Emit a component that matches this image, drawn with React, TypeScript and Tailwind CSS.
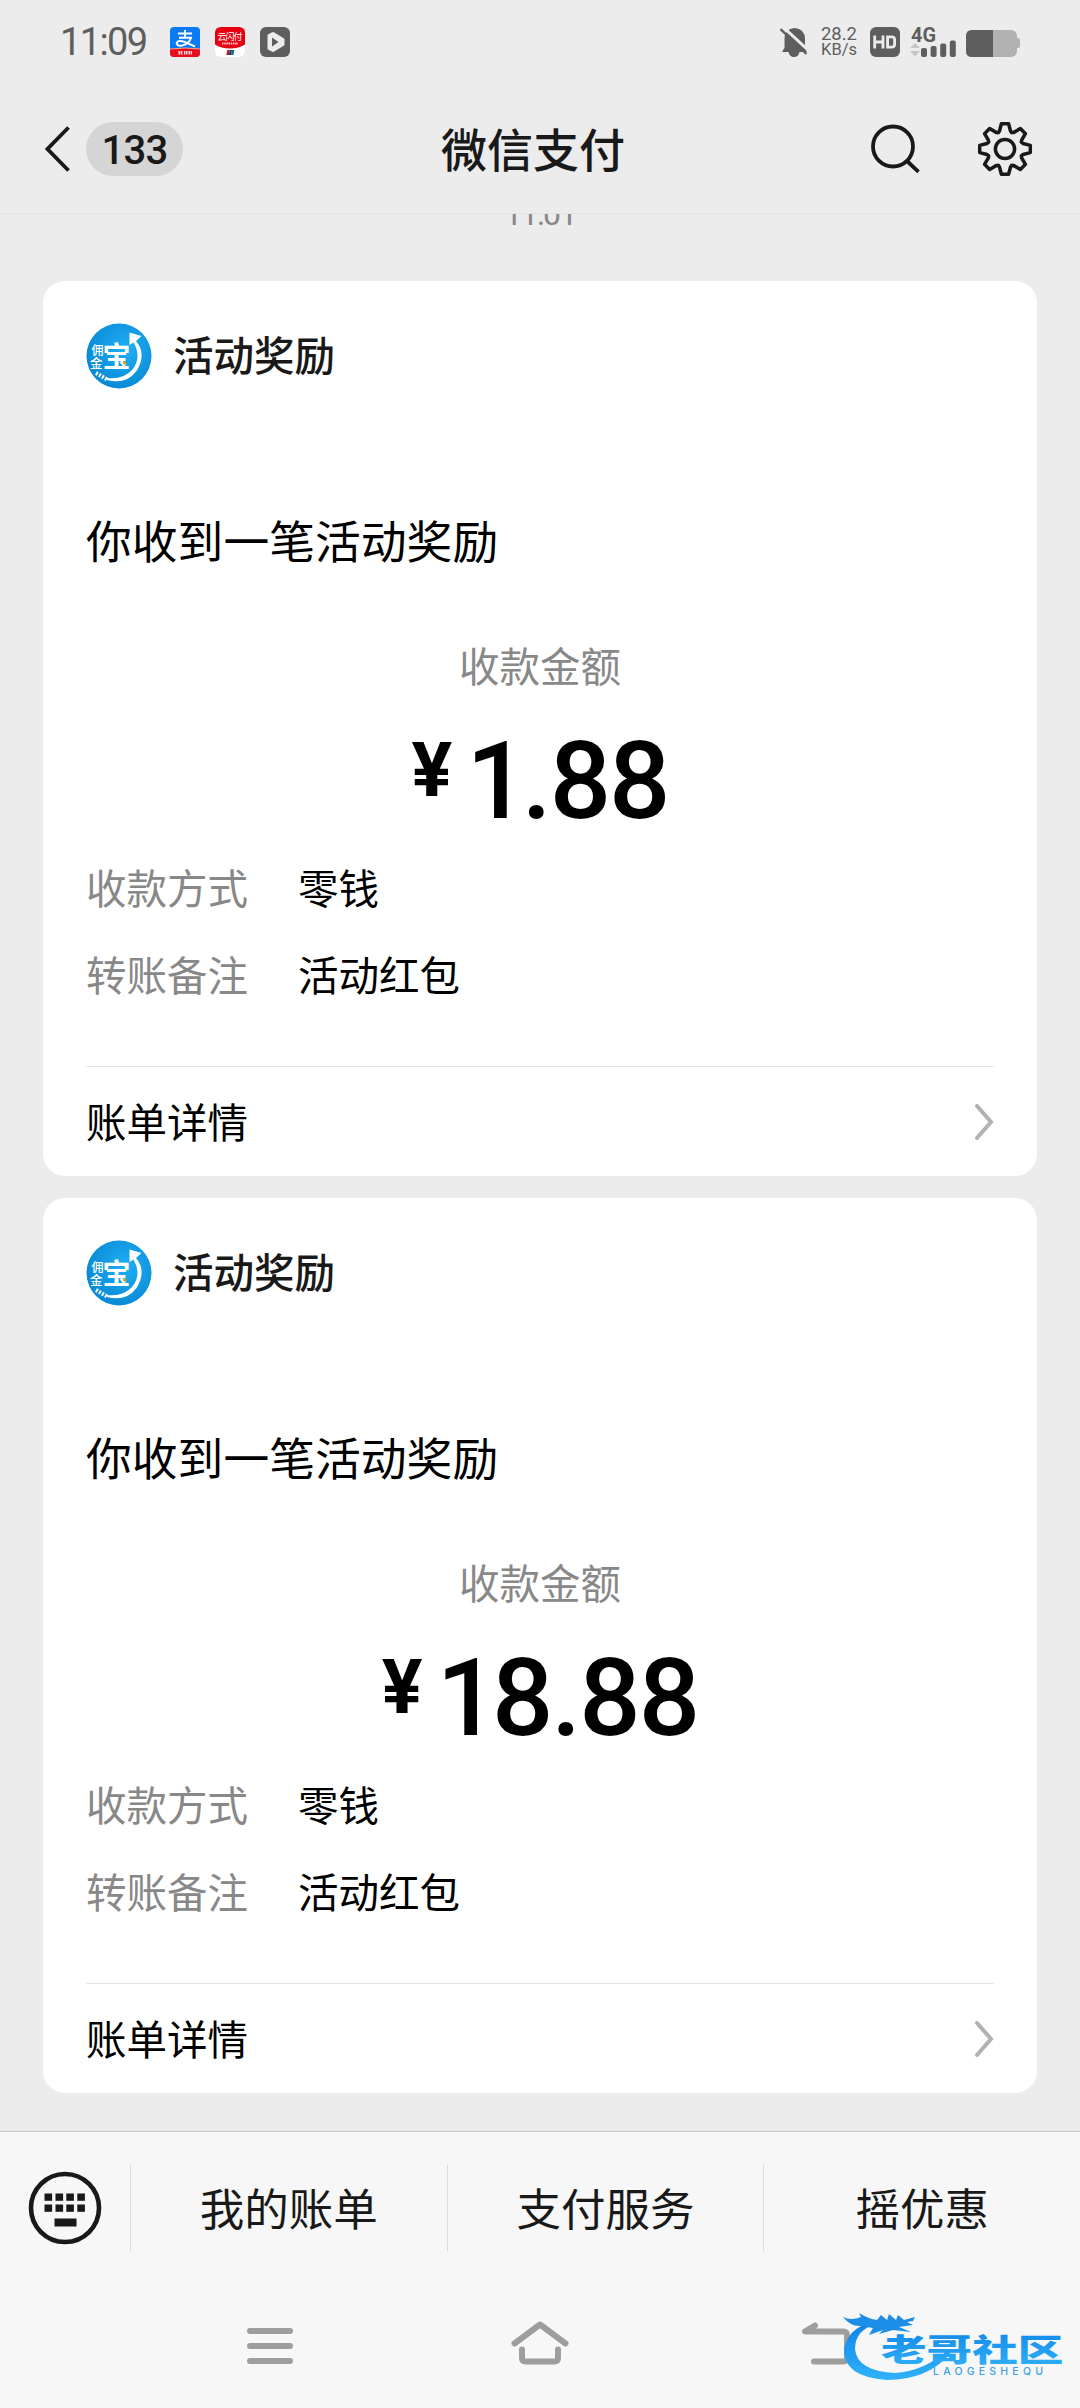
import { ReactNode } from 'react'

interface Reward {
  id: number
  amount: string
  method: string
  remark: string
}

const rewards: Reward[] = [
  { id: 1, amount: '1.88', method: '零钱', remark: '活动红包' },
  { id: 2, amount: '18.88', method: '零钱', remark: '活动红包' },
]

const menuItems = ['我的账单', '支付服务', '摇优惠']

function AlipayIcon() {
  return (
    <svg width="30" height="30" viewBox="0 0 30 30">
      <clipPath id="alipay-clip">
        <rect width="30" height="30" rx="4" />
      </clipPath>
      <g clipPath="url(#alipay-clip)">
        <rect width="30" height="30" fill="#0a7bf5" />
        <path d="M0 22 Q15 20 30 22 V30 H0 Z" fill="#e60f1e" />
        <path d="M0 22 Q15 20 30 22" stroke="#f6a58c" strokeWidth="1" fill="none" />
        <path d="M8 6.5 H22 M15 3 V10.500 M9 10.700 H21 Q19 17 12 18.500 C6 19.500 5 14.500 9.500 14 C14 13.600 19 17 25 19.500" stroke="#fff" strokeWidth="2" fill="none" />
        <path d="M8.500 25.800 H13 M14 25.800 H17.500 M18.500 25.800 H22" stroke="#fff" strokeWidth="3.500" strokeDasharray="1.500 0.600" opacity="0.85" />
      </g>
    </svg>
  )
}

function UnionPayIcon() {
  return (
    <svg width="30" height="30" viewBox="0 0 30 30">
      <rect width="30" height="30" rx="6" fill="#fff" />
      <path d="M6 0 H24 Q30 0 30 6 V17.500 Q24 21.500 15 21.500 Q6 21.500 0 17.500 V6 Q0 0 6 0 Z" fill="#e60012" />
      <text x="15" y="12.500" fontSize="9" textAnchor="middle" textLength="25" fill="#fff" fontFamily="'Noto Sans CJK SC', sans-serif">云闪付</text>
      <path d="M7 16.500 H23" stroke="#fff" strokeWidth="2" strokeDasharray="1.500 0.700" opacity="0.8" />
      <path d="M12.300 23 H14.800 L13.800 28 H11.300 Z" fill="#c8102e" />
      <path d="M14.800 23 H17 L16 28 H13.800 Z" fill="#123c6e" />
      <path d="M17 23 H19.300 L18.300 28 H16 Z" fill="#00707a" />
    </svg>
  )
}

function PlayIcon() {
  return (
    <svg width="30" height="30" viewBox="0 0 30 30">
      <rect width="30" height="30" rx="6" fill="#5e5e5e" />
      <path d="M9 8.500 L13 6.500 L23 12.500 V17.500 L13 23.500 L9 21.500 Z" fill="#ececec" stroke="#ececec" strokeWidth="3" strokeLinejoin="round" />
      <path d="M12 10.500 V19.500 L18.500 15 Z" fill="#5e5e5e" />
    </svg>
  )
}

function MutedBellIcon() {
  return (
    <svg width="28" height="32" viewBox="0 0 28 32">
      <path d="M3 25 V24 L4.500 22 V13 Q4.500 3 14.500 2 Q25 3 25 13 V21 L26.500 24 V26 H19.500 Q18.500 31 14 31 Q9.500 31 8.500 26 H1.500 Z" fill="#5e5e5e" />
      <path d="M2 0 L29 25" stroke="#ececec" strokeWidth="3" />
      <path d="M0.500 3 L26.500 28" stroke="#5e5e5e" strokeWidth="2.400" />
    </svg>
  )
}

function HdIcon() {
  return (
    <svg width="30" height="30" viewBox="0 0 30 30">
      <rect width="30" height="30" rx="6" fill="#5e5e5e" />
      <path d="M4.700 8.500 V21.500 M13 8.500 V21.500 M4.700 15 H13" stroke="#ececec" strokeWidth="2.800" fill="none" />
      <path d="M17.600 9.900 H21.500 Q24.600 9.900 24.600 12.500 V17.500 Q24.600 20.100 21.500 20.100 H17.600 Z" stroke="#ececec" strokeWidth="2.800" fill="none" />
    </svg>
  )
}

function SignalIcon() {
  return (
    <svg width="46" height="36" viewBox="0 -4 46 36">
      <text x="1" y="15.500" fontSize="20" fontWeight="700" textLength="25" lengthAdjust="spacingAndGlyphs" fill="#5e5e5e" fontFamily="Roboto, sans-serif">4G</text>
      <path d="M0 22 L5 17 L10 22 Z M0 25 L5 30.500 L10 25 Z" fill="#c6c6c6" />
      <rect x="11" y="22" width="6" height="9" rx="2" fill="#5e5e5e" />
      <rect x="20.600" y="20" width="6" height="11" rx="2" fill="#5e5e5e" />
      <rect x="30.200" y="17.500" width="6" height="13.500" rx="2" fill="#5e5e5e" />
      <rect x="39.800" y="14.500" width="6" height="16.500" rx="2" fill="#5e5e5e" />
    </svg>
  )
}

function BatteryIcon() {
  return (
    <svg width="54" height="27" viewBox="0 0 54 27">
      <rect width="51" height="27" rx="6" fill="#b2b2b2" />
      <rect x="49" y="8" width="5" height="10" rx="2" fill="#b2b2b2" />
      <path d="M6 0 H27 V27 H6 Q0 27 0 21 V6 Q0 0 6 0 Z" fill="#5e5e5e" />
    </svg>
  )
}

function SearchIcon() {
  return (
    <svg width="50" height="50" viewBox="0 0 50 50" fill="none" stroke="#191919" strokeWidth="3.800">
      <circle cx="23" cy="22.500" r="20" />
      <path d="M37 37 L48.500 47.800" />
    </svg>
  )
}

// Eight teeth, each one is the same outline rotated by 45 degrees
function GearIcon() {
  const tooth = [[-7, -16.300], [-5.500, -18], [-3.600, -25.300], [3.600, -25.300], [5.500, -18], [7, -16.300]]
  const points = Array.from({ length: 8 }).flatMap((_, i) => {
    const a = (i * Math.PI) / 4
    return tooth.map(([x, y]) =>
      `${(x * Math.cos(a) - y * Math.sin(a)).toFixed(2)},${(x * Math.sin(a) + y * Math.cos(a)).toFixed(2)}`
    )
  })

  return (
    <svg width="56" height="56" viewBox="-28 -28 56 56" fill="none" stroke="#191919" strokeWidth="3.500" strokeLinejoin="round">
      <polygon points={points.join(' ')} />
      <circle r="9.600" />
    </svg>
  )
}

function RewardLogo() {
  return (
    <svg width="66" height="66" viewBox="0 0 66 66">
      <defs>
        <radialGradient id="logo-fill" cx="0.6" cy="0.4" r="0.6">
          <stop offset="0" stopColor="#1fb0f5" />
          <stop offset="1" stopColor="#0a8ad6" />
        </radialGradient>
      </defs>
      <circle cx="33" cy="33" r="32.500" fill="url(#logo-fill)" />
      <path d="M21 57 Q40 62 50.500 48 Q61 31 50 18 L55.500 13 L43.500 9.500 V22 L47.500 19.500 Q56 34 46.500 46.500 Q37 57 21 55 Z" fill="#fff" />
      <path d="M10 50 L22 57" stroke="#fff" strokeWidth="4" strokeDasharray="2 1.500" />
      <g fill="#fff" fontFamily="'Noto Sans CJK SC', sans-serif" fontWeight="500">
        <text x="5.500" y="31.500" fontSize="12">佣</text>
        <text x="4" y="45" fontSize="12.500">金</text>
        <text x="16.500" y="44" fontSize="28" fontWeight="700">宝</text>
      </g>
      <circle cx="38.500" cy="40" r="1.800" fill="#d9a91c" />
    </svg>
  )
}

function KeyboardIcon() {
  return (
    <svg width="74" height="74" viewBox="0 0 74 74" fill="#191919">
      <circle cx="37" cy="37" r="34" fill="none" stroke="#191919" strokeWidth="4.600" />
      {[16.500, 27.500, 38.300, 49.300].map((x) => (
        <g key={x}>
          <rect x={x} y="22.500" width="7.600" height="7.300" />
          <rect x={x} y="33.500" width="7.600" height="7.300" />
        </g>
      ))}
      <rect x="26.500" y="47.500" width="22" height="8" />
    </svg>
  )
}

function Watermark() {
  return (
    <svg width="245" height="84" viewBox="0 0 245 84">
      <defs>
        <linearGradient id="wm" x1="0" y1="0" x2="0" y2="1">
          <stop offset="0" stopColor="#1183e6" />
          <stop offset="1" stopColor="#2fb2fa" />
        </linearGradient>
      </defs>
      {/* Dragon body */}
      <path d="M48 16 Q14 18 9 44 Q8 72 52 75 Q92 75 115 49 L114 44 Q90 66 60 68 Q22 66 20 44 Q20 24 44 18 Z" fill="url(#wm)" />
      {/* Dragon head with whiskers */}
      <path d="M8 12 Q16 16 26 12 L24 8 Q34 14 42 15 L46 10 L52 15 L54 9 L61 15 L63 10 L69 15 L80 12 L78 16 L72 17 L78 20 L64 22 L76 27 L58 25 L44 29 L48 25 L34 30 L38 23 L26 21 Q16 22 8 12 Z" fill="#1c8ee8" />
      <g transform="translate(46 55.500) scale(1.2 0.8)">
        <text x="0" y="0" fontSize="38" fontWeight="900" textLength="152" fill="url(#wm)" fontFamily="'Noto Sans CJK SC', sans-serif">老哥社区</text>
      </g>
      <text x="98" y="69.500" fontSize="10.500" fontWeight="500" textLength="110" fill="#3f9fe6" fontFamily="Inter, sans-serif">LAOGESHEQU</text>
    </svg>
  )
}

function StatusBar() {
  return (
    <div className="flex h-[84px] items-center justify-between pl-[60px] pr-[60px] text-[#5e5e5e]">
      <div className="flex items-center">
        <span className="w-[110px] font-[Roboto] text-[38px] leading-none tracking-[-1.6px]">11:09</span>
        <div className="flex gap-[15px]">
          <AlipayIcon />
          <UnionPayIcon />
          <PlayIcon />
        </div>
      </div>
      <div className="flex items-center">
        <MutedBellIcon />
        <div className="ml-[9px] mr-[13px] w-[40px] text-right font-[Roboto] leading-[16px]">
          <p className="text-[18.5px]">28.2</p>
          <p className="text-[16.5px]">KB/s</p>
        </div>
        <HdIcon />
        <div className="ml-[10px] -mt-[4px]">
          <SignalIcon />
        </div>
        <div className="ml-[10px] mt-[2px]">
          <BatteryIcon />
        </div>
      </div>
    </div>
  )
}

function Header() {
  return (
    <div className="flex h-[130px] items-center border-b border-[#e3e3e3] pl-[45px] pr-[47px] text-[#191919]">
      <svg width="26" height="48" viewBox="0 0 26 48" fill="none" stroke="#191919" strokeWidth="3.800">
        <path d="M23.500 2.500 L2.500 24 L23.500 45.500" />
      </svg>
      <span className="ml-[15px] flex h-[54px] w-[97px] items-center justify-center rounded-full bg-[#d5d5d5] pt-[4px] font-[Roboto] text-[40px] font-medium tracking-[-0.8px]">
        133
      </span>
      <h1 className="-mt-[4px] ml-[258px] text-[46px] font-medium leading-none">微信支付</h1>
      <div className="ml-auto flex items-center gap-[57px]">
        <SearchIcon />
        <GearIcon />
      </div>
    </div>
  )
}

function DetailRow({ label, children }: { label: string; children: ReactNode }) {
  return (
    <div className="flex h-[87px] items-center text-[40.5px] leading-none">
      <span className="w-[212px] text-[#888888]">{label}</span>
      <span>{children}</span>
    </div>
  )
}

function RewardCard({ reward }: { reward: Reward }) {
  return (
    <div className="flex h-[895px] flex-col rounded-[22px] bg-white px-[43px] pt-[42px] text-black">
      <div className="flex h-[66px] items-center gap-[21px]">
        <RewardLogo />
        <span className="-mt-[4px] text-[40.5px] font-medium leading-none text-[#191919]">活动奖励</span>
      </div>

      <p className="mt-[117px] text-[45.8px] leading-[66px]">你收到一笔活动奖励</p>

      <p className="mt-[64px] text-center text-[40.5px] leading-[58px] text-[#888888]">收款金额</p>
      <div className="flex h-[150px] items-start justify-center gap-[16px] pt-[34px] font-[Roboto] font-medium">
        <span className="text-[76px] font-bold leading-[84px] tracking-[-2px]">¥</span>
        <span className="text-[108px] leading-[106px] tracking-[-2px]">
          {/* The leading 1 sits tighter than the other digits */}
          <span className="tracking-[-6px]">{reward.amount[0]}</span>
          {reward.amount.slice(1)}
        </span>
      </div>

      <DetailRow label="收款方式">{reward.method}</DetailRow>
      <DetailRow label="转账备注">{reward.remark}</DetailRow>

      <div className="mt-[48px] flex flex-1 items-center justify-between border-t border-[#e5e5e5]">
        <span className="text-[40.5px] leading-none">账单详情</span>
        <svg width="19" height="36" viewBox="0 0 19 36" fill="none" stroke="#b2b2b2" strokeWidth="4">
          <path d="M2 2 L16 18 L2 34" strokeLinecap="round" />
        </svg>
      </div>
    </div>
  )
}

function MenuBar() {
  return (
    <div className="flex h-[151px] items-center">
      <div className="flex w-[130px] justify-center">
        <KeyboardIcon />
      </div>
      {menuItems.map((item) => (
        <div key={item} className="flex h-[86px] flex-1 items-center justify-center border-l border-[#dcdcdc] text-[44.5px] leading-none text-[#191919]">
          {item}
        </div>
      ))}
    </div>
  )
}

function SystemNav() {
  return (
    <div className="grid h-[125px] grid-cols-3 items-center justify-items-center px-[135px]">
      <svg width="46" height="38" viewBox="0 0 46 38" stroke="#9e9e9e" strokeWidth="6" strokeLinecap="round">
        <path d="M3 4 H43 M3 19 H43 M3 34 H43" />
      </svg>
      <svg className="-mt-[5px]" width="58" height="46" viewBox="0 0 58 46" fill="none" stroke="#9e9e9e" strokeWidth="6" strokeLinecap="round" strokeLinejoin="round">
        <path d="M3.500 23.500 L29 4.500 L54.500 23.500" />
        <path d="M11 29.500 V38 Q11 41.500 15 41.500 H43 Q47 41.500 47 38 V29.500" />
      </svg>
      <svg className="-mt-[5px] ml-[32px]" width="50" height="46" viewBox="0 0 50 46" fill="none" stroke="#9e9e9e" strokeWidth="6" strokeLinecap="round" strokeLinejoin="round">
        <path d="M14 5.500 L4 11.500 H42 Q46 11.500 46 15 V38 Q46 41.500 42 41.500 H13" />
      </svg>
    </div>
  )
}

export default function App() {
  return (
    <div className="relative flex h-[2408px] w-[1080px] flex-col overflow-hidden bg-[#ececec] font-['Noto_Sans_CJK_SC',sans-serif]">
      <StatusBar />
      <Header />

      <main className="flex-1 overflow-hidden px-[43px]">
        {/* Timestamp is scrolled half under the header */}
        <p className="-mt-[20px] h-[87px] text-center font-[Roboto] text-[32px] leading-[40px] tracking-[-1.6px] text-[#888888]">11:01</p>
        <div className="space-y-[22px]">
          {rewards.map((reward) => (
            <RewardCard key={reward.id} reward={reward} />
          ))}
        </div>
      </main>

      <footer className="border-t border-[#c8c8c8] bg-[#f7f7f7]">
        <MenuBar />
        <SystemNav />
      </footer>

      <div className="absolute left-[835px] top-[2305px]">
        <Watermark />
      </div>
    </div>
  )
}
